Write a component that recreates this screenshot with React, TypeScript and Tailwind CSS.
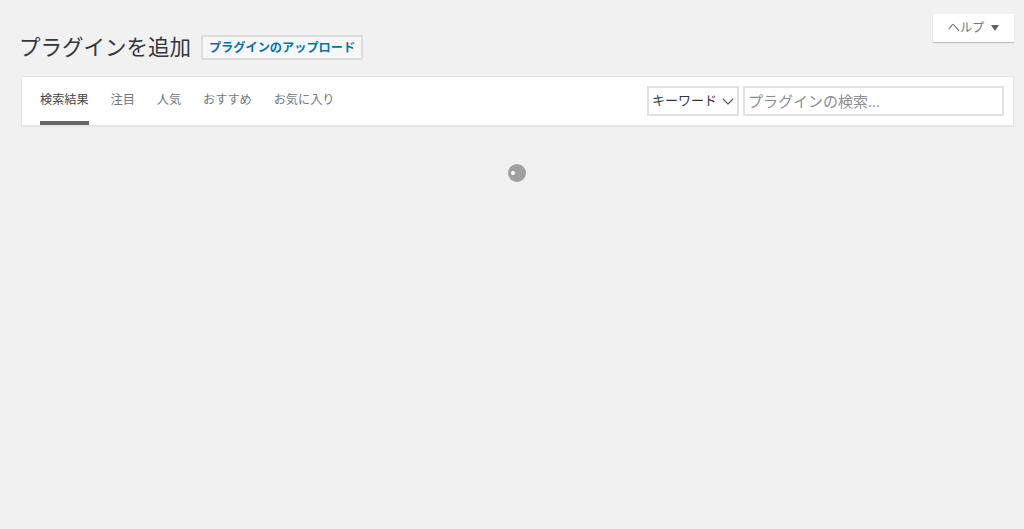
const font = { fontFamily: '"Open Sans","Noto Sans CJK JP",sans-serif' };

export default function App() {
  const tabs = ["検索結果", "注目", "人気", "おすすめ", "お気に入り"];
  return (
    <div className="min-h-[529px] bg-[#f1f1f1] text-[#444] text-[12.2px] pt-[14px]" style={font}>
      <div className="flex justify-end pr-[10px] h-[21px]">
        <button className="h-[28px] w-[81px] bg-white text-[#72777c] text-[12.2px] shadow-[0_1px_1px_rgba(0,0,0,0.2)] flex items-center justify-center gap-[7px]">
          ヘルプ
          <svg width="8" height="6" viewBox="0 0 8 6"><path d="M0 0h8L4 6z" fill="#606060" /></svg>
        </button>
      </div>
      <div className="flex items-center pl-[20px] h-[25px]">
        <h1 className="text-[21.5px] leading-[24px] text-[#32373c] font-normal mb-[2px] -ml-px">プラグインを追加</h1>
        <button className="ml-[10px] h-[25px] w-[162px] border-2 border-[#ddd] bg-[#f7f7f7] rounded-[2px] text-[#0073aa] font-semibold text-[12.2px] leading-none flex items-center justify-center pt-px">
          プラグインのアップロード
        </button>
      </div>
      <div className="ml-[21px] mr-[10px] mt-[16px] h-[50px] bg-white border border-[#e5e5e5] shadow-[0_1px_1px_rgba(0,0,0,0.04)] flex justify-between">
        <div className="flex gap-[21.85px] pl-[18px]">
          {tabs.map((t, i) => (
            <div
              key={t}
              className={
                "h-[48px] pt-[14px] leading-[18px] border-b-[4px] " +
                (i === 0 ? "border-[#666] text-[#464646]" : "border-transparent text-[#72777c]")
              }
            >
              {t}
            </div>
          ))}
        </div>
        <div className="flex items-center gap-[4px] pr-[9px]">
          <div className="h-[30px] w-[92px] border-2 border-[#e2e2e2] flex items-center justify-between pl-[3px] pr-[3px] text-[13px] text-[#32373c]">
            キーワード
            <svg width="12" height="7" viewBox="0 0 12 7" fill="none"><path d="M1 1l5 5 5-5" stroke="#555" strokeWidth="1.1" /></svg>
          </div>
          <div className="h-[30px] w-[261px] border-2 border-[#e2e2e2] flex items-center pl-[3px] text-[15px] text-[#8a8f94]">
            プラグインの検索...
          </div>
        </div>
      </div>
      <div className="flex justify-center pt-[38px] pl-[10px]">
        <div className="relative w-[18px] h-[18px] rounded-full bg-[#a0a0a0]">
          <div className="absolute left-[3px] top-[7px] w-[4px] h-[4px] rounded-full bg-white" />
        </div>
      </div>
    </div>
  );
}
